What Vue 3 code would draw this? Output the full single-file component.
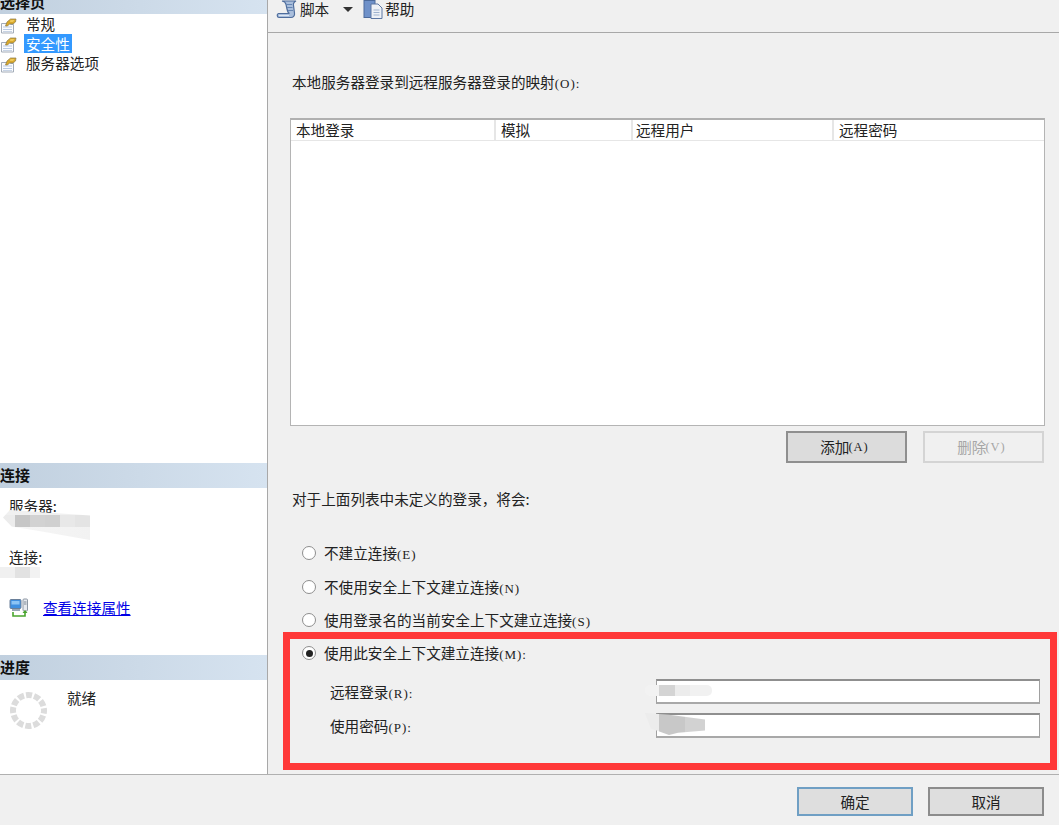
<script setup>
const pages = [
  { label: '常规', selected: false },
  { label: '安全性', selected: true },
  { label: '服务器选项', selected: false }
]
const columns = [
  { label: '本地登录', width: 205 },
  { label: '模拟', width: 137 },
  { label: '远程用户', width: 201 },
  { label: '远程密码', width: 210 }
]
const radios = [
  { text: '不建立连接', key: '(E)' },
  { text: '不使用安全上下文建立连接', key: '(N)' },
  { text: '使用登录名的当前安全上下文建立连接', key: '(S)' }
]
const creds = [
  { text: '远程登录', key: '(R):', smudge: 'smudge-login' },
  { text: '使用密码', key: '(P):', smudge: 'smudge-pass' }
]
</script>

<template>
  <div class="dialog">
    <div class="body">
      <aside class="side">
        <div class="band band-top"><span>选择页</span></div>
        <ul class="pages">
          <li v-for="p in pages" :key="p.label" class="page">
            <svg class="page-icon" width="17" height="17" viewBox="0 0 17 17">
              <path d="M1.500 6.500h9v1h3v8.500h-12z" fill="#fbfcfe" stroke="#a3acb8" />
              <path d="M3 10h9M3 12.500h9" stroke="#b9cbe6" stroke-width="1" fill="none" />
              <path d="M3 14.500h9" stroke="#c7d3e4" fill="none" />
              <path d="M5.500 9l1.500-4 3.500-3 5.500 0-.5 3-2.500 2-3.500 0-2 2z" fill="#d9a92a" stroke="#8b7a4a" stroke-width=".7" />
              <path d="M10.500 3l4 0-1.500 2-3 0z" fill="#efc95a" />
            </svg>
            <span class="page-text" :class="{ selected: p.selected }">{{ p.label }}</span>
          </li>
        </ul>

        <div class="band"><span>连接</span></div>
        <div class="conn">
          <div class="conn-label">服务器:</div>
          <i class="smudge smudge-server"></i>
          <div class="conn-label conn-second">连接:</div>
          <i class="smudge smudge-conn"></i>
          <div class="conn-link">
            <svg width="20" height="20" viewBox="0 0 20 20">
              <rect x="1" y="1.500" width="11" height="9" rx="1" fill="#3f8fe0" stroke="#6a7f99" />
              <rect x="2.500" y="3" width="8" height="3.500" fill="#8cc4f5" />
              <rect x="3" y="11" width="8" height="2" fill="#9aa7b5" />
              <rect x="14" y="1" width="4.500" height="12" rx="1" fill="#e6e9ee" stroke="#8d97a3" />
              <path d="M15 4h2.500M15 6h2.500" stroke="#7d8894" />
              <path d="M4 14v4h12v-4" fill="none" stroke="#4aa52e" stroke-width="1.600" />
              <path d="M13.500 15l2.500-3 2.500 3z" fill="#4aa52e" />
            </svg>
            <a class="link">查看连接属性</a>
          </div>
        </div>

        <div class="band"><span>进度</span></div>
        <div class="progress">
          <svg class="spinner" width="37" height="37" viewBox="0 0 37 37">
            <circle cx="18.500" cy="18.500" r="15.500" fill="none" stroke="#dcdcdc" stroke-width="6" stroke-dasharray="6.100 2.016" stroke-dashoffset="3" />
          </svg>
          <span class="progress-text">就绪</span>
        </div>
      </aside>

      <main class="main">
        <div class="toolbar">
          <svg class="tool-icon" width="21" height="19" viewBox="0 0 21 19">
            <path d="M6 1H20C18 2 17 3.500 17.500 5.500L18.500 13C19 16 17 17.500 15 17.500H3C1 17.500 .5 14 2.500 13.500H13.500C12 13 11.500 11 11 9L10 4.500C9.700 2.500 8.500 1.500 6 1Z" fill="#a9bedc" stroke="#4f6d9c" stroke-width="1.200" />
            <path d="M10 4.500H16M11 7.500H16.500M12 10.500H17" stroke="#6585b3" />
            <path d="M3 15.500H13" stroke="#dfe7f2" />
          </svg>
          <span class="tool-text">脚本</span>
          <i class="caret"></i>
          <svg class="tool-icon help-icon" width="20" height="19" viewBox="0 0 20 19">
            <rect x="1" y="0.500" width="11" height="17" fill="#6f91c9" stroke="#4c6a9b" />
            <path d="M8 4h7l4 4v10.500H8z" fill="#eef1f6" stroke="#5d77a3" />
            <path d="M10.500 10h6M10.500 12.500h6M10.500 15h6" stroke="#9fb2cf" />
          </svg>
          <span class="tool-text help-text">帮助</span>
        </div>

        <div class="content">
          <p class="heading first">本地服务器登录到远程服务器登录的映射<span class="key">(O):</span></p>

          <div class="table">
            <div class="thead">
              <div v-for="c in columns" :key="c.label" class="th" :style="{ width: c.width + 'px' }">{{ c.label }}</div>
            </div>
          </div>

          <div class="table-actions">
            <button class="btn btn-dark">添加<span class="key">(A)</span></button>
            <button class="btn btn-off">删除<span class="key">(V)</span></button>
          </div>

          <p class="heading second">对于上面列表中未定义的登录，将会:</p>

          <div class="radios">
            <label v-for="r in radios" :key="r.key" class="radio-row">
              <i class="radio"></i>
              <span>{{ r.text }}<span class="key">{{ r.key }}</span></span>
            </label>
          </div>
        </div>

        <section class="marked">
          <label class="radio-row">
            <i class="radio on"></i>
            <span>使用此安全上下文建立连接<span class="key">(M):</span></span>
          </label>
          <div v-for="c in creds" :key="c.key" class="cred">
            <span class="cred-label">{{ c.text }}<span class="key">{{ c.key }}</span></span>
            <div class="input"></div>
            <i class="smudge" :class="c.smudge"></i>
          </div>
        </section>
      </main>
    </div>

    <footer class="footer">
      <button class="btn btn-foot btn-primary">确定</button>
      <button class="btn btn-foot">取消</button>
    </footer>
  </div>
</template>

<style scoped>
.dialog {
  width: 1059px;
  height: 825px;
  overflow: hidden;
  background: #f0f0f0;
  color: #222;
  font-family: "Noto Sans CJK SC", "Liberation Sans", sans-serif;
  font-size: 14.600px;
  line-height: 20px;
  display: flex;
  flex-direction: column;
}
.body {
  height: 774px;
  flex: none;
  display: flex;
  border-bottom: 1px solid #b0b0b0;
  box-sizing: content-box;
}
.side {
  width: 267px;
  flex: none;
  background: #fff;
  border-right: 1px solid #a8a8a8;
  display: flex;
  flex-direction: column;
}
.band {
  height: 25px;
  flex: none;
  display: flex;
  align-items: center;
  background: linear-gradient(90deg, #c1d0df, #d6e3f0);
  font-weight: 700;
  font-size: 15px;
  line-height: 20px;
  color: #111;
}
.band span {
  margin-top: -2px;
}
.band-top {
  height: 14px;
  align-items: flex-end;
  overflow: hidden;
}
.band-top span {
  line-height: 25px;
  flex: none;
  margin-top: 0;
}
.pages {
  list-style: none;
  margin: 0;
  padding: 1px 0 0;
  height: 449px;
  box-sizing: border-box;
}
.page {
  height: 19.500px;
  display: flex;
  align-items: center;
}
.page-icon {
  flex: none;
  margin-top: 1px;
}
.page-text {
  margin-left: 7px;
  padding: 0 2px;
  line-height: 19px;
  position: relative;
  top: -1px;
}
.page-text.selected {
  background: #3399ff;
  color: #fff;
}
.conn {
  height: 167px;
  position: relative;
  box-sizing: border-box;
  padding: 8px 0 0 9px;
}
.conn-second {
  margin-top: 31px;
}
.conn-link {
  margin-top: 31px;
  display: flex;
  align-items: center;
  gap: 14px;
}
.conn-link svg {
  flex: none;
}
.link {
  color: #0000e6;
  text-decoration: underline;
}
.progress {
  flex: 1;
  display: flex;
  align-items: flex-start;
  padding: 12px 0 0 10px;
}
.spinner {
  flex: none;
}
.progress-text {
  margin-left: 20px;
  margin-top: -1px;
  line-height: 14px;
}
.main {
  flex: 1;
  min-width: 0;
  display: flex;
  flex-direction: column;
}
.toolbar {
  height: 32px;
  flex: none;
  border-bottom: 1px solid #a8a8a8;
  box-sizing: content-box;
  display: flex;
  align-items: flex-start;
  padding-left: 8px;
}
.tool-icon {
  flex: none;
  margin-top: 0;
}
.tool-text {
  margin-left: 3px;
  line-height: 18px;
}
.help-text {
  margin-left: 2px;
}
.help-icon {
  margin-left: 10px;
}
.caret {
  margin: 7px 0 0 14px;
  width: 0;
  height: 0;
  border-left: 5px solid transparent;
  border-right: 5px solid transparent;
  border-top: 5px solid #333;
}
.content {
  padding-left: 22px;
}
.heading {
  margin: 0;
  padding-left: 2px;
}
.first {
  margin-top: 39px;
}
.second {
  margin-top: 26px;
}
.key {
  font-family: "Liberation Serif", serif;
  font-size: 13px;
  letter-spacing: 1px;
  line-height: 1;
}
.table {
  margin-top: 26px;
  width: 755px;
  height: 308px;
  box-sizing: border-box;
  background: #fff;
  border: 1px solid #b4b4b4;
  border-top: 2px solid #b0b0b0;
}
.thead {
  display: flex;
  height: 21px;
  border-bottom: 1px solid #e6e6e6;
  box-sizing: border-box;
}
.th {
  box-sizing: border-box;
  padding-left: 5px;
  border-right: 2px solid #e6e6e6;
  line-height: 20px;
  flex: none;
}
.th:nth-child(3) {
  padding-left: 3px;
}
.th:last-child {
  border-right: 0;
}
.table-actions {
  margin-top: 5px;
  width: 754px;
  display: flex;
  justify-content: flex-end;
  gap: 16px;
}
.btn {
  width: 121px;
  height: 32px;
  box-sizing: border-box;
  padding: 0;
  font: inherit;
  color: #222;
  background: #dedede;
  border: 1px solid #8a8a8a;
  display: flex;
  align-items: center;
  justify-content: center;
}
.btn .key {
  font-size: 12.500px;
  margin-left: -1px;
}
.btn-dark {
  background: #dcdcdc;
  border: 2px solid #8f8f8f;
  padding-right: 4px;
}
.btn-off {
  background: #f0f0f0;
  border: 2px solid #d4d4d4;
  color: #a6a6a6;
  padding-right: 4px;
}
.radios {
  margin-top: 34px;
  margin-left: 12px;
  display: flex;
  flex-direction: column;
  gap: 13.500px;
}
.radio-row {
  height: 20px;
  display: flex;
  align-items: center;
  gap: 8px;
}
.radio {
  width: 14px;
  height: 14px;
  box-sizing: border-box;
  flex: none;
  border-radius: 50%;
  border: 1.500px solid #8e8e8e;
  background: #fff;
  position: relative;
}
.radio.on::after {
  content: "";
  position: absolute;
  inset: 2.500px;
  border-radius: 50%;
  background: #222;
}
.marked {
  margin-left: 15px;
  margin-top: 2px;
  width: 774px;
  height: 138px;
  flex: none;
  box-sizing: border-box;
  border: 7px solid #ff3838;
  padding: 4px 10px 25px 12px;
}
.cred {
  position: relative;
  height: 25px;
  margin-top: 9px;
  display: flex;
  align-items: center;
  padding-left: 28px;
}
.radio-row + .cred {
  margin-top: 16px;
}
.cred-label {
  width: 326px;
  flex: none;
}
.input {
  flex: 1;
  height: 25px;
  box-sizing: border-box;
  background: #fff;
  border: 1px solid #a0a0a0;
  border-top: 2px solid #8f8f8f;
  border-bottom: 2px solid #a8a8a8;
}
.smudge {
  position: absolute;
  display: block;
  filter: blur(.6px);
}
.smudge-server {
  left: 3px;
  top: 22px;
  width: 87px;
  height: 30px;
  background:
    linear-gradient(90deg, #ececec 0 12px, #c6c6c6 12px 27px, #d2d2d2 27px 42px, #d0d0d0 42px 57px, #e8e8e8 57px 72px, #e4e4e4 72px) 0 5px / 100% 12px no-repeat,
    linear-gradient(90deg, #f6f6f6, #f2f2f2) 0 17px / 100% 13px no-repeat,
    #f0f0f0;
  clip-path: polygon(0 25%, 8% 0, 100% 18%, 100% 100%, 45% 72%, 10% 55%);
}
.smudge-conn {
  left: 0;
  top: 79px;
  width: 40px;
  height: 11px;
  background: linear-gradient(90deg, #f0f0f0 0 15px, #e2e2e2 15px 30px, #f2f2f2 30px);
}
.smudge-login {
  left: 343px;
  top: 6px;
  width: 67px;
  height: 11px;
  border-radius: 5px;
  background: linear-gradient(90deg, #f2f2f2 0 14px, #d4d4d4 14px 30px, #ececec 30px 45px, #f1f1f1 45px);
}
.smudge-pass {
  left: 343px;
  top: 0;
  width: 60px;
  height: 22px;
  clip-path: polygon(0 0, 40% 8%, 100% 30%, 100% 80%, 55% 90%, 40% 100%, 10% 70%);
  background: linear-gradient(90deg, #ececec 0 14px, #c8c8c8 14px 40px, #d2d2d2 40px);
}
.footer {
  flex: 1;
  display: flex;
  justify-content: flex-end;
  align-items: flex-start;
  gap: 15px;
  padding: 12px 15px 0 0;
}
.btn-foot {
  width: 116px;
  height: 29px;
  border: 2px solid #8c8c8c;
}
.btn-primary {
  border-color: #6f9fc4;
}
</style>
